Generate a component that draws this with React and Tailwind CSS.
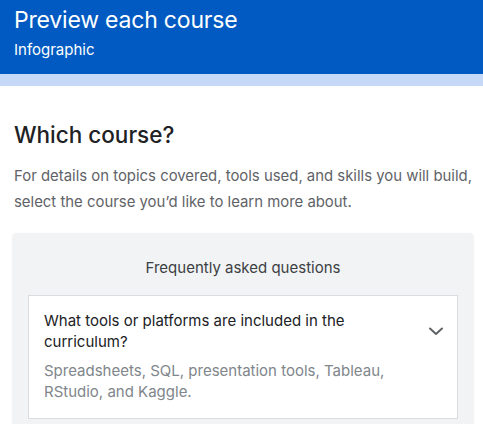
import React from 'react';

export default function App() {
  return (
    <div className="w-[483px] h-[424px] overflow-hidden bg-white font-['Inter',sans-serif]">
      {/* Header */}
      <div className="bg-[#005ac1] h-[74px] px-[14px] pt-[4px]">
        <h1 className="text-white text-[23px] leading-[32px] tracking-[-0.2px]">Preview each course</h1>
        <p className="text-white text-[15px] leading-[20px] mt-[4px]">Infographic</p>
      </div>
      <div className="bg-[#c6d9f8] h-[12px]" />

      {/* Intro */}
      <div className="pl-[14px] pt-[33px]">
        <h2 className="text-[#202124] text-[22.5px] leading-[32px] font-medium">Which course?</h2>
        <p className="text-[#5f6368] text-[14.9px] leading-[26px] mt-[12px]">
          For details on topics covered, tools used, and skills you will build, select the course you’d like to learn more about.
        </p>
      </div>

      {/* FAQ card */}
      <div className="ml-[13px] mr-[10px] mt-[18px] bg-[#f1f3f4] rounded-t-[4px] shadow-[0_1px_2px_rgba(60,64,67,0.2)] px-[15px] pt-[24px] pb-[20px]">
        <p className="text-center text-[#3c4043] text-[15px] leading-[22px]">Frequently asked questions</p>
        <div className="mt-[16px] bg-white border border-[#dadce0] pl-[15px] pr-[14px] pt-[14px] pb-[16px]">
          <div className="flex items-start">
            <p className="flex-1 text-[#202124] text-[15px] leading-[21px] pr-[40px]">
              What tools or platforms are included in the curriculum?
            </p>
            <svg width="20" height="20" viewBox="0 0 20 20" className="mt-[11px] mr-[-3px] text-[#5f6368]">
              <path d="M4 7.5l6 5.5 6-5.5" fill="none" stroke="currentColor" strokeWidth="2" strokeLinecap="round" strokeLinejoin="round" />
            </svg>
          </div>
          <p className="text-[#80868b] text-[15px] leading-[21px] mt-[8px] max-w-[350px]">
            Spreadsheets, SQL, presentation tools, Tableau, RStudio, and Kaggle.
          </p>
        </div>
      </div>
    </div>
  );
}
